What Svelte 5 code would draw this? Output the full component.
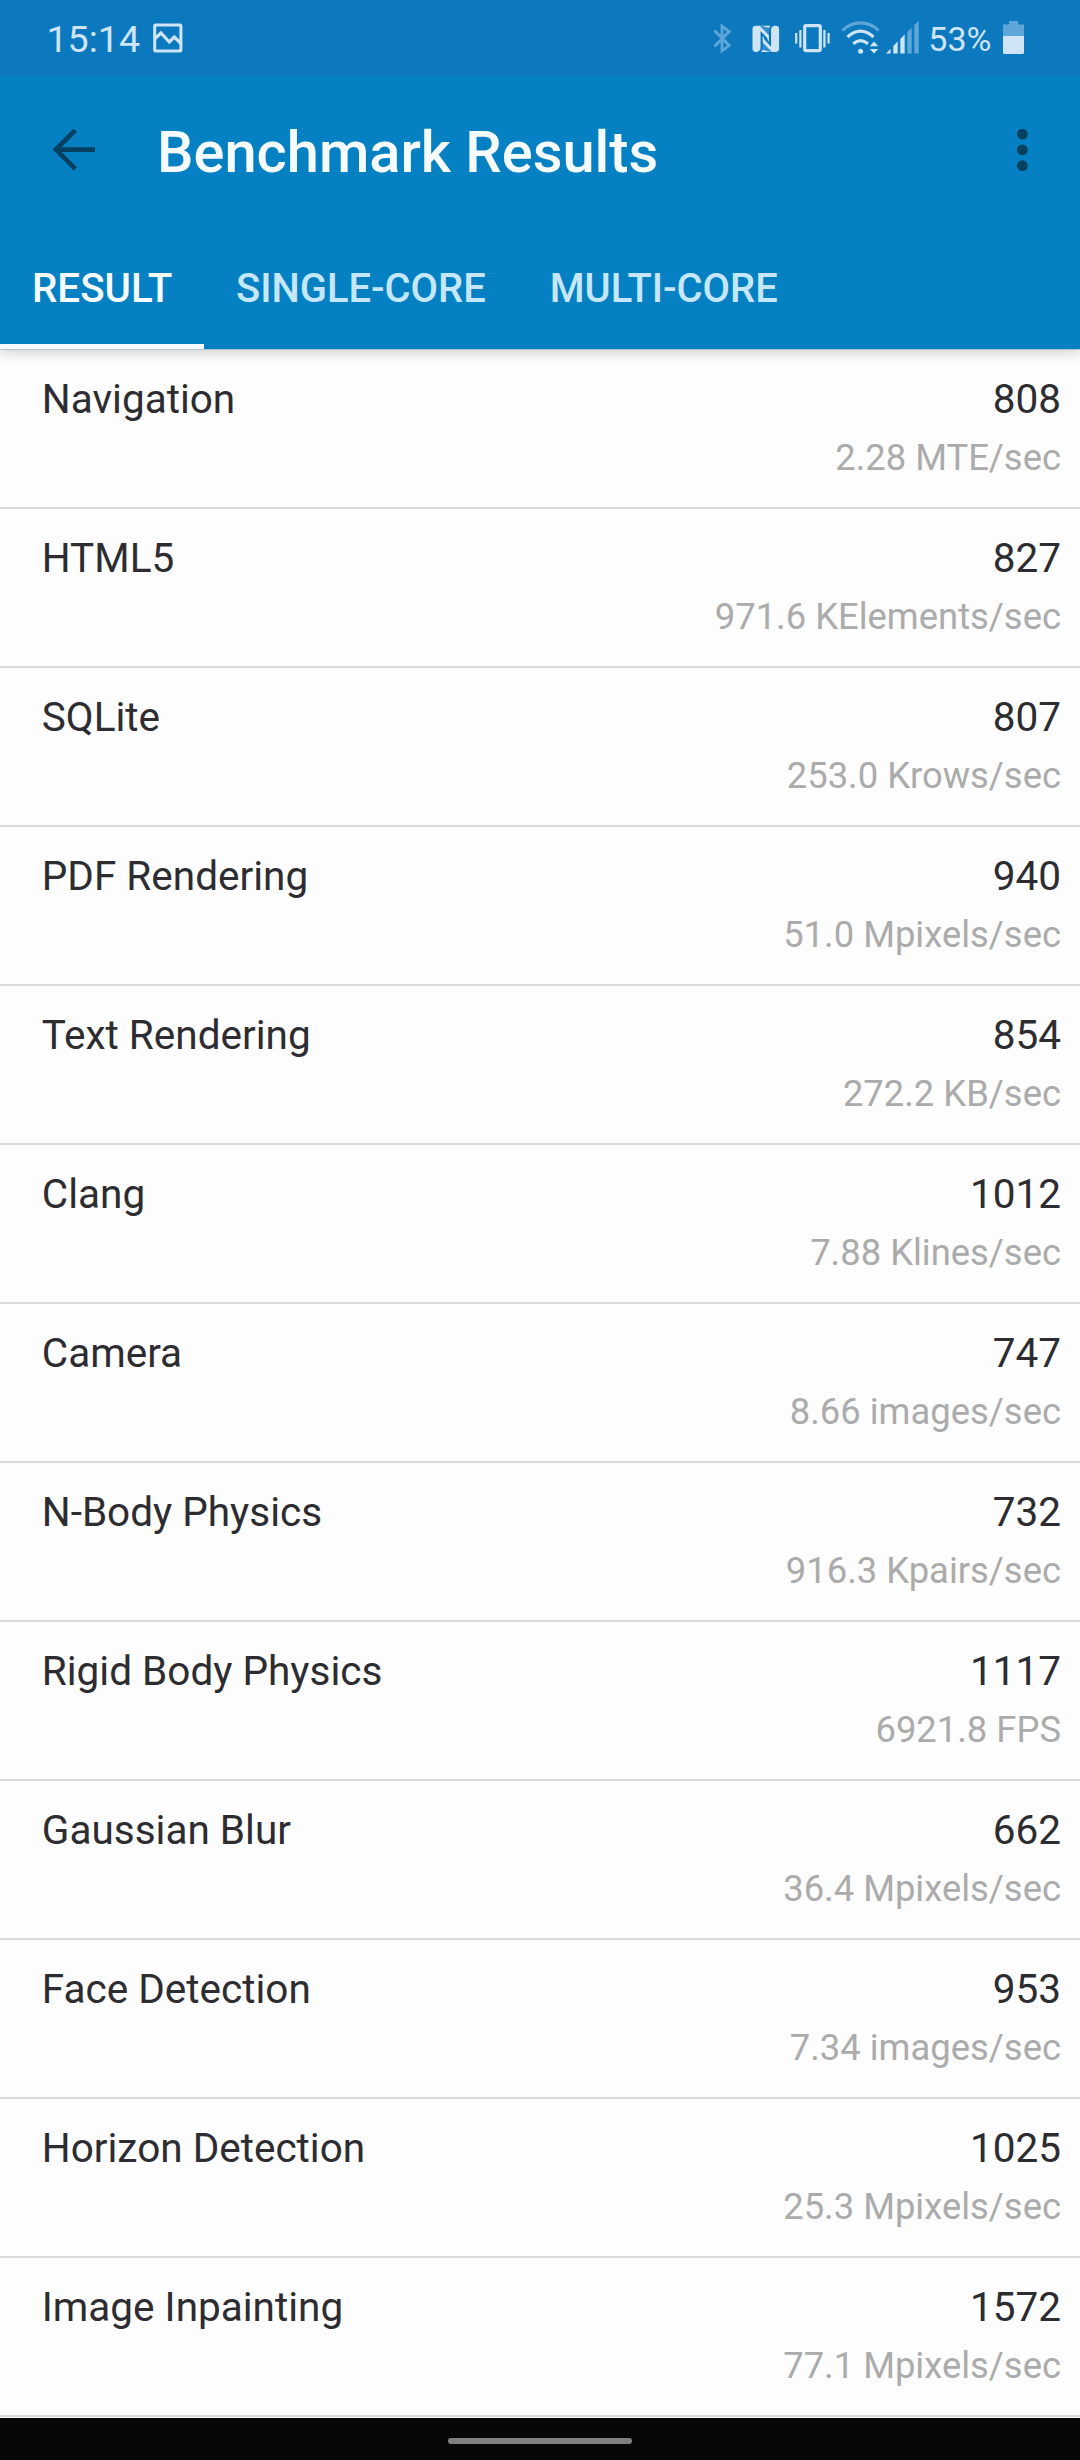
<script>
  const tabs = ['RESULT', 'SINGLE-CORE', 'MULTI-CORE'];
  let active = $state(0);

  const results = [
    { name: 'Navigation', score: '808', rate: '2.28 MTE/sec' },
    { name: 'HTML5', score: '827', rate: '971.6 KElements/sec' },
    { name: 'SQLite', score: '807', rate: '253.0 Krows/sec' },
    { name: 'PDF Rendering', score: '940', rate: '51.0 Mpixels/sec' },
    { name: 'Text Rendering', score: '854', rate: '272.2 KB/sec' },
    { name: 'Clang', score: '1012', rate: '7.88 Klines/sec' },
    { name: 'Camera', score: '747', rate: '8.66 images/sec' },
    { name: 'N-Body Physics', score: '732', rate: '916.3 Kpairs/sec' },
    { name: 'Rigid Body Physics', score: '1117', rate: '6921.8 FPS' },
    { name: 'Gaussian Blur', score: '662', rate: '36.4 Mpixels/sec' },
    { name: 'Face Detection', score: '953', rate: '7.34 images/sec' },
    { name: 'Horizon Detection', score: '1025', rate: '25.3 Mpixels/sec' },
    { name: 'Image Inpainting', score: '1572', rate: '77.1 Mpixels/sec' }
  ];
</script>

<div class="screen">
  <header>
    <div class="status">
      <span class="clock">15:14</span>
      <svg class="picture" width="30" height="30" viewBox="0 0 30 30">
        <rect x="1.7" y="1.9" width="26.2" height="26.2" rx="1" fill="none" stroke="currentColor" stroke-width="3" />
        <path d="M2 15.5L8 10L16.3 19L21.3 14L28 20.5" fill="none" stroke="currentColor" stroke-width="3.2" />
      </svg>

      <div class="indicators">
        <!-- bluetooth -->
        <svg width="20" height="40" viewBox="712 18 20 40">
          <path d="M714.4 30.4L729.2 45.4L722 51V26L729.2 31.6L714.4 46.4" fill="none" stroke="#5ea6d7" stroke-width="2.8" />
        </svg>
        <!-- nfc -->
        <svg width="30" height="40" viewBox="751 18 30 40">
          <rect x="752.5" y="25.7" width="26.6" height="26.3" rx="3.4" fill="currentColor" />
          <path d="M757.8 52.6Q761.6 51.6 761.6 48V33.6L767.2 39.6M773.8 25.1Q770 26.1 770 29.7V44.1L764.4 38.1" fill="none" stroke="#0c79bf" stroke-width="2.1" />
          <path d="M759.4 25.4L769.6 36V28ZM772.2 52.3L762 41.7V49.7Z" fill="#0c79bf" opacity="0.8" />
        </svg>
        <!-- vibrate -->
        <svg width="38" height="40" viewBox="794 18 38 40">
          <path d="M796.2 33V43.5M800.4 30V47.5M828.6 33V43.5M824.4 30V47.5" fill="none" stroke="currentColor" stroke-width="2.2" />
          <rect x="804.7" y="25.7" width="15.6" height="25" rx="1.4" fill="none" stroke="currentColor" stroke-width="3.2" />
        </svg>
        <!-- wifi -->
        <svg width="42" height="40" viewBox="840 18 42 40">
          <g fill="none" stroke-width="3.1">
            <path d="M842.4 30.5C853 20.3 868 20.3 878.6 30.5" stroke="#5ea6d7" />
            <path d="M847.5 37C856 29.4 865 29.4 873.5 37" stroke="currentColor" />
            <path d="M853.2 43.7C858.2 39.4 863 39.4 868 43.7" stroke="currentColor" />
          </g>
          <circle cx="860.6" cy="51.2" r="2.5" fill="currentColor" />
          <path d="M869.8 46.2L874 41.6L878.2 46.2ZM869.8 49L874 53.6L878.2 49Z" fill="currentColor" />
        </svg>
        <!-- cell signal -->
        <svg width="36" height="40" viewBox="885 18 36 40">
          <path d="M886 53.6L890.6 48.8V53.6ZM893.3 46L897.7 41.5V53.6H893.3ZM900.3 39L904.7 34.5V53.6H900.3Z" fill="currentColor" />
          <path d="M907.3 32L911.7 27.5V53.6H907.3ZM914.3 25.3L918.7 21V53.6H914.3Z" fill="#5ea6d7" />
        </svg>
        <span class="percent">53%</span>
        <!-- battery -->
        <svg class="battery" width="22" height="40" viewBox="1003 18 22 40">
          <path d="M1003 36V24.4H1009V21H1018V24.4H1024V36Z" fill="#5ea6d7" />
          <path d="M1003 36H1024V52.4Q1024 54 1022.4 54H1004.6Q1003 54 1003 52.4Z" fill="currentColor" />
        </svg>
      </div>
    </div>

    <div class="toolbar">
      <button class="back" aria-label="Back">
        <svg width="44" height="44" viewBox="0 0 44 44">
          <path d="M43 21.6H5M23.3 2.3L4 21.6L23.3 40.9" fill="none" stroke="#04405f" stroke-width="4.8" />
        </svg>
      </button>
      <h1>Benchmark Results</h1>
      <button class="more" aria-label="More options">
        <svg width="12" height="44" viewBox="0 0 12 44">
          <g fill="#04405f">
            <circle cx="6.4" cy="6.1" r="5.4" />
            <circle cx="6.4" cy="21.9" r="5.4" />
            <circle cx="6.4" cy="37.7" r="5.4" />
          </g>
        </svg>
      </button>
    </div>

    <nav>
      {#each tabs as tab, i}
        <button class="tab" class:active={active === i} onclick={() => (active = i)}>{tab}</button>
      {/each}
    </nav>
  </header>

  <main>
    {#each results as r}
      <div class="row">
        <span class="name">{r.name}</span>
        <div class="values">
          <span class="score">{r.score}</span>
          <span class="rate">{r.rate}</span>
        </div>
      </div>
    {/each}
  </main>

  <footer><span class="pill"></span></footer>
</div>

<style>
  :global(body) {
    margin: 0;
  }
  .screen {
    display: flex;
    flex-direction: column;
    width: 1080px;
    height: 2460px;
    overflow: hidden;
    background: #fdfdfd;
    color: #2c2c31;
    font-family: Roboto, sans-serif;
  }
  button {
    margin: 0;
    padding: 0;
    border: 0;
    background: none;
    font: inherit;
    color: inherit;
  }
  svg {
    display: block;
    flex: none;
  }
  header {
    flex: none;
    position: relative;
    height: 349px;
    background: #0580c2;
    color: #f5fbff;
    border-bottom: 1px solid #b9c3ca;
    box-shadow: 0 2px 14px rgba(0, 0, 0, 0.2);
  }
  .status {
    display: flex;
    align-items: flex-start;
    height: 76px;
    padding: 0 56px 0 46.5px;
    box-sizing: border-box;
    background: #0c79bf;
    color: #cfe4f4;
  }
  .clock {
    margin-top: 17px;
    width: 106.5px;
    font-size: 37.6px;
    line-height: 44px;
  }
  .picture {
    margin-top: 22.5px;
  }
  .indicators {
    display: flex;
    margin: 18px 0 0 auto;
  }
  .indicators svg:nth-child(2) {
    margin-left: 19px;
  }
  .indicators svg:nth-child(3) {
    margin-left: 13px;
  }
  .indicators svg:nth-child(4) {
    margin-left: 8px;
  }
  .indicators svg:nth-child(5) {
    margin-left: 3px;
  }
  .percent {
    width: 74.7px;
    margin: 1px 0 0 7.3px;
    font-size: 34px;
    line-height: 40px;
  }
  .battery {
    margin-right: -1px;
  }
  .toolbar {
    display: flex;
    align-items: center;
    height: 152px;
  }
  .back {
    width: 157px;
    padding: 0 0 5px 52px;
    box-sizing: border-box;
  }
  h1 {
    margin: 0;
    font-size: 57.8px;
    font-weight: 500;
    line-height: 68px;
  }
  .more {
    margin: 0 52px 5px auto;
  }
  nav {
    display: flex;
    height: 121px;
  }
  .tab {
    height: 121px;
    padding: 5px 32px 0;
    box-sizing: border-box;
    border-bottom: 5px solid transparent;
    font-size: 39.9px;
    font-weight: 500;
    line-height: 47px;
    color: #c5e7fb;
  }
  .tab.active {
    width: 204px;
    padding-right: 0;
    text-align: left;
    font-size: 40.3px;
    border-color: #f5fbff;
    color: #f5fbff;
  }
  main {
    flex: none;
  }
  .row {
    display: flex;
    justify-content: space-between;
    height: 159px;
    padding: 25px 19px 0 41.8px;
    box-sizing: border-box;
    border-bottom: 2px solid #dadada;
  }
  .name,
  .score {
    font-size: 40.5px;
    line-height: 48px;
  }
  .values {
    display: flex;
    flex-direction: column;
    align-items: flex-end;
    gap: 13px;
  }
  .rate {
    font-size: 36.4px;
    line-height: 43px;
    color: #ababab;
  }
  footer {
    display: flex;
    justify-content: center;
    margin-top: auto;
    height: 42px;
    padding: 20px 1px 0 0;
    box-sizing: border-box;
    background: #070707;
  }
  .pill {
    width: 137px;
    min-width: 184px;
    height: 6px;
    border-radius: 3px;
    background: #808080;
  }
</style>
